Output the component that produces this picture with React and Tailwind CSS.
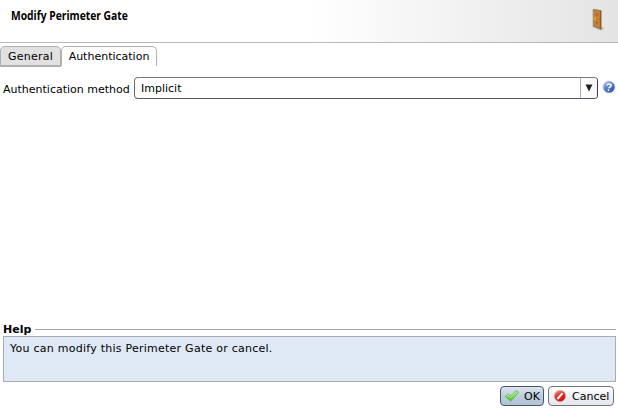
import React from 'react';

function DoorIcon() {
  return (
    <svg width="16" height="24" viewBox="0 0 16 24" className="shrink-0">
      <path d="M1 19 5 17.5 14 20 10 22.5Z" fill="#b6b6b6" opacity=".8" />
      <path d="M2.2 1.3 10.2 2.5 10.2 21.6 2.2 18.2Z" fill="#bd7d2b" stroke="#8b8375" strokeWidth=".8" />
      <path d="M9.4 2.8V21" stroke="#965711" strokeWidth="1" />
      <path d="M4 4 8 4.6V9.5L4 8.7ZM4 12 8 13V18L4 16.2Z" fill="#b66a38" stroke="#d39a4b" strokeWidth=".7" />
      <circle cx="3.8" cy="10.6" r="1.2" fill="#efb321" />
    </svg>
  );
}

function HelpIcon() {
  return (
    <svg width="14" height="14" viewBox="0 0 14 14" className="shrink-0">
      <defs>
        <linearGradient id="helpFill" x1="0" y1="0" x2=".7" y2="1">
          <stop offset="0" stopColor="#c9d3ea" />
          <stop offset=".5" stopColor="#5c83d0" />
          <stop offset="1" stopColor="#2450ad" />
        </linearGradient>
      </defs>
      <circle cx="7" cy="7" r="6" fill="url(#helpFill)" stroke="#c3cde2" strokeWidth=".8" />
      <path d="M5 5.5C5.3 3.4 9.4 3.3 9.2 5.5 9.1 6.9 7.1 6.8 6.8 8.4" fill="none" stroke="#fff" strokeWidth="1.5" />
      <circle cx="6.5" cy="10.2" r=".9" fill="#fff" />
    </svg>
  );
}

function CheckIcon() {
  return (
    <svg width="16" height="16" viewBox="0 0 16 16" className="shrink-0">
      <defs>
        <linearGradient id="checkFill" x1="0" y1="0" x2="0" y2="1">
          <stop offset="0" stopColor="#a5e486" />
          <stop offset="1" stopColor="#48c51e" />
        </linearGradient>
      </defs>
      <path d="M1.2 8.4 4 5.8 6.5 8.3 12.3 2.6 14.7 4.3 6.8 13.3Z" fill="url(#checkFill)" stroke="#69b950" strokeWidth=".8" />
      <path d="M2.5 8.2 4 6.9 6.6 9.5 12.5 3.8" fill="none" stroke="#d3f5bc" strokeWidth=".8" />
    </svg>
  );
}

function CancelIcon() {
  return (
    <svg width="14" height="14" viewBox="0 0 14 14" className="shrink-0">
      <defs>
        <linearGradient id="cancelFill" x1="0" y1="0" x2=".5" y2="1">
          <stop offset="0" stopColor="#ecbcb9" />
          <stop offset=".45" stopColor="#e23b37" />
          <stop offset="1" stopColor="#d00d0d" />
        </linearGradient>
      </defs>
      <circle cx="7" cy="7" r="5.7" fill="url(#cancelFill)" stroke="#d6aaa8" strokeWidth=".6" />
      <path d="M4.4 10 9.6 4.2" stroke="#fff" strokeWidth="2" />
    </svg>
  );
}

export default function App() {
  return (
    <div className="flex h-[408px] w-[618px] flex-col overflow-hidden bg-white font-['DejaVu_Sans',sans-serif] text-[11px] leading-[14px] text-black">
      <header className="flex h-[43px] shrink-0 justify-between border-b border-[#b8b8b8] bg-linear-to-r from-white from-50% to-[#e4e4e4] pl-[11px] pr-[11px] pt-2">
        <h1 className="h-[14px] origin-left scale-x-[0.857] whitespace-nowrap font-['Open_Sans',sans-serif] text-[12px] font-bold leading-[15px]">Modify Perimeter Gate</h1>
        <DoorIcon />
      </header>

      <nav className="mt-[3px] flex h-[21px] shrink-0">
        <button className="h-[21px] w-[61px] rounded-t-[5px] border border-b-2 border-[#afafaf] bg-[#e1e1e1] pt-px tracking-[0.25px]">General</button>
        <button className="h-[20px] w-[96px] rounded-t-[5px] border border-b-0 border-[#b0b0b0] bg-white">Authentication</button>
      </nav>

      <div className="mt-[10px] flex h-[22px] shrink-0 items-center pl-[3px]">
        <label className="w-[131px] whitespace-nowrap pt-[3px]">Authentication method</label>
        <div className="flex h-[22px] w-[464px] overflow-hidden rounded-[4px] border border-b-[#525460] border-l-[#696a73] border-r-[#353e50] border-t-[#777780]">
          <span className="flex-1 pl-1.5 pt-1">Implicit</span>
          <span className="flex w-[17px] items-center justify-center border-l border-[#a5adb8] bg-linear-to-r from-white to-[#f5f5f5]">
            <svg width="8" height="8" viewBox="0 0 8 8"><path d="M.5.5h7L4 7.5Z" fill="#222" /></svg>
          </span>
        </div>
        <div className="ml-1 pb-[2px]"><HelpIcon /></div>
      </div>

      <section className="mt-auto shrink-0 pl-[3px] pr-[2px]">
        <div className="flex h-[14px] items-center">
          <h2 className="w-[32px] pt-[2px] font-bold">Help</h2>
          <span className="h-px flex-1 bg-[#a5a6ac]" />
        </div>
        <div className="h-[46px] border border-[#a9abb2] bg-[#dfe9f5] pl-1.5 pt-[5px] tracking-[0.25px]">You can modify this Perimeter Gate or cancel.</div>
      </section>

      <footer className="mb-[2px] mt-1 flex h-[20px] shrink-0 justify-end gap-1 pr-1">
        <button className="flex h-[20px] w-[44px] items-center rounded-[4px] border border-[#485468] bg-linear-to-b from-[#dde5ef] via-[#bdccdd] to-[#b0c4d9] pl-[3px]">
          <CheckIcon /><span className="ml-1 pt-[2px]">OK</span>
        </button>
        <button className="flex h-[20px] w-[66px] items-center rounded-[4px] border border-[#70737e] bg-linear-to-b from-white via-[#eff0f2] to-[#e5e7eb] pl-[4px]">
          <CancelIcon /><span className="ml-[5px] pt-[2px]">Cancel</span>
        </button>
      </footer>
    </div>
  );
}
